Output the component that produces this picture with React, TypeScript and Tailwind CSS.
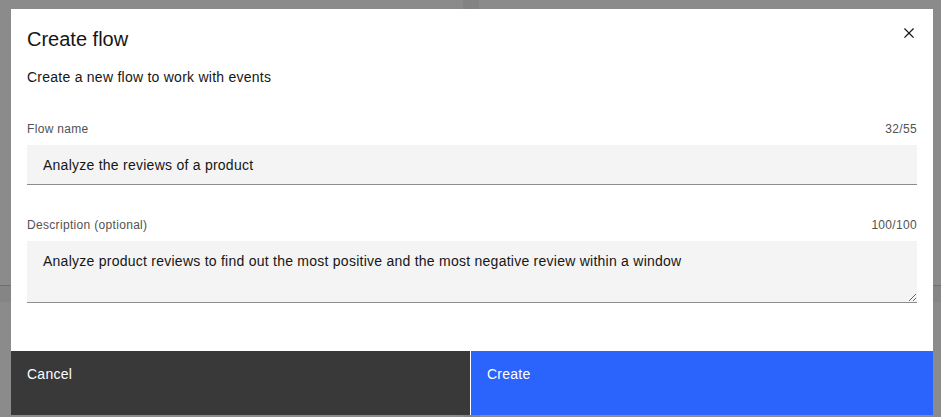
import React from 'react';

const font = { fontFamily: '"Liberation Sans", Arial, sans-serif' };

const CloseIcon: React.FC = () => (
  <svg width="20" height="20" viewBox="0 0 32 32" fill="#161616">
    <path d="M24 9.4 22.6 8 16 14.6 9.4 8 8 9.4l6.6 6.6L8 22.6 9.4 24l6.6-6.6 6.6 6.6 1.4-1.4-6.6-6.6z" />
  </svg>
);

export default function App() {
  return (
    <div className="relative w-[941px] h-[417px] overflow-hidden bg-[#8b8b8b]" style={font}>
      {/* Page behind the overlay */}
      <div className="flex h-full">
        <div className="flex-1 flex flex-col">
          <div className="h-[286px] border-b border-[#6f6f6f]" />
          <div className="h-[16px] bg-[#858585]" />
        </div>
        <div className="w-[16px] bg-[#838383]" />
        <div className="flex-1 flex flex-col">
          <div className="h-[286px] border-b border-[#6f6f6f]" />
          <div className="h-[16px] bg-[#858585]" />
        </div>
      </div>

      {/* Modal */}
      <div className="absolute left-[11px] top-[9px] w-[922px] h-[406px] bg-white flex flex-col">
        <button className="absolute right-0 top-0 w-12 h-12 flex items-center justify-center">
          <CloseIcon />
        </button>

        <div className="px-4 pt-4 flex-1">
          <h2 className="text-[20px] leading-[28px] text-[#161616]">Create flow</h2>
          <p className="mt-[15px] text-[14px] leading-[18px] tracking-[0.25px] text-[#161616]">
            Create a new flow to work with events
          </p>

          <div className="mt-[35px]">
            <div className="flex justify-between text-[12px] leading-[16px] tracking-[0.32px] text-[#525252] mb-2">
              <span>Flow name</span>
              <span>32/55</span>
            </div>
            <input
              readOnly
              value="Analyze the reviews of a product"
              className="w-full h-10 px-4 bg-[#f4f4f4] border-b border-[#8d8d8d] text-[14px] tracking-[0.25px] text-[#161616] outline-none"
              style={font}
            />
          </div>

          <div className="mt-8">
            <div className="flex justify-between text-[12px] leading-[16px] tracking-[0.32px] text-[#525252] mb-2">
              <span>Description (optional)</span>
              <span>100/100</span>
            </div>
            <textarea
              readOnly
              value="Analyze product reviews to find out the most positive and the most negative review within a window"
              className="block w-full h-[62px] px-4 py-[10px] bg-[#f4f4f4] border-b border-[#8d8d8d] text-[14px] leading-[20px] tracking-[0.25px] text-[#161616] outline-none resize-y"
              style={font}
            />
          </div>
        </div>

        <div className="flex gap-px h-16">
          <button className="w-[459px] bg-[#393939] text-white text-[14px] leading-[18px] tracking-[0.25px] text-left px-4 pt-[14px] flex items-start">
            Cancel
          </button>
          <button className="flex-1 bg-[#2b64fd] text-white text-[14px] leading-[18px] tracking-[0.25px] text-left px-4 pt-[14px] flex items-start">
            Create
          </button>
        </div>
      </div>
    </div>
  );
}
